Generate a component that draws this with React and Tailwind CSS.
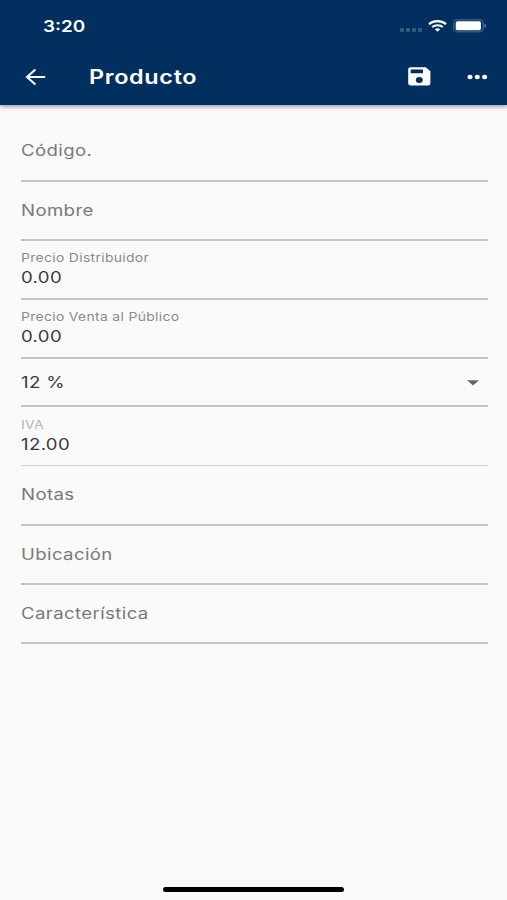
import React from 'react';

function Field({ label, value, labelTop = 'mt-[18px]', height = 'h-[59px]', muted = false }) {
  return (
    <div className={`flex shrink-0 flex-col ${height} ${muted ? 'border-b border-[#d0d0d0]' : 'border-b-2 border-[#c5c5c5]'}`}>
      {value ? (
        <>
          <span className={`block h-4 origin-left scale-x-[1.2] self-start whitespace-nowrap text-[11.6px] leading-4 tracking-[0.27px] ${muted ? 'mt-[10px] text-[#b4b4b4]' : 'mt-[9px] text-[#8a8a8a]'}`}>
            {label}
          </span>
          <span className="mt-px block h-[22px] origin-left scale-x-[1.2] self-start whitespace-nowrap text-[15.5px] leading-[22px] tracking-[0.3px] text-[#3a3a3a]">
            {value}
          </span>
        </>
      ) : (
        <span className={`${labelTop} block h-[22px] origin-left scale-x-[1.2] self-start whitespace-nowrap text-[15.5px] leading-[22px] tracking-[0.32px] text-[#797979]`}>
          {label}
        </span>
      )}
    </div>
  );
}

function StatusBar() {
  return (
    <div className="flex h-[50px] items-center pl-[43px] pr-[20px] pt-[2px]">
      <span className="mt-[2px] origin-left scale-x-[1.22] text-[15.5px] font-semibold">3:20</span>
      <div className="ml-auto flex items-center">
        <div className="mr-[6px] mt-[8px] flex gap-[2px]">
          {[0, 1, 2, 3].map((i) => (
            <i key={i} className="h-[4px] w-[4px] rounded-[1px] bg-[#34597f]" />
          ))}
        </div>
        <svg width="19" height="12" viewBox="0 0 19 12" className="mr-[6px]" fill="none" stroke="white">
          <path d="M1 4.1C5.8 0.2 13.2 0.2 18 4.1" strokeWidth="2.2" />
          <path d="M4.2 7C7.2 4.5 11.8 4.5 14.8 7" strokeWidth="2" />
          <path d="M6.8 9.2C8.2 8 10.8 8 12.2 9.2L9.5 11.7Z" fill="white" stroke="none" />
        </svg>
        <svg width="34" height="14" viewBox="0 0 34 14">
          <rect x="0.75" y="0.75" width="29.5" height="12" rx="3.5" fill="none" stroke="#365b82" strokeWidth="1.5" />
          <rect x="2.7" y="2.3" width="25.3" height="9" rx="1.7" fill="white" />
          <path d="M31.5 4.6C33.4 5.4 33.4 8.4 31.5 9.2Z" fill="#6d88a5" />
        </svg>
      </div>
    </div>
  );
}

function AppBar() {
  return (
    <div className="flex h-[53px] items-center pl-[25px] pr-[18px]">
      <svg width="21" height="18" viewBox="0 0 21 18" fill="none" stroke="white" strokeWidth="2.1">
        <path d="M20.2 9H2M10.4 1.5L2 9L10.4 16.5" />
      </svg>
      <h1 className="ml-[43px] origin-left scale-x-[1.2] text-[19.5px] font-semibold leading-6 tracking-[0.55px]">Producto</h1>
      <svg width="23" height="19" viewBox="0 0 23 19" className="ml-auto">
        <path fill="white" fillRule="evenodd" d="M2.6 0.3H17.8L22.4 4.3V16.5Q22.4 18.5 20 18.5H2.6Q0.2 18.5 0.2 16.5V2.3Q0.2 0.3 2.6 0.3ZM2.7 2.4V6.3H15V2.4ZM11.3 10A3.5 3 0 1 0 11.3 16A3.5 3 0 1 0 11.3 10Z" />
      </svg>
      <svg width="22" height="6" viewBox="0 0 22 6" className="ml-[36.5px]" fill="white">
        <ellipse cx="3" cy="3" rx="2.6" ry="2.2" />
        <ellipse cx="10.3" cy="3" rx="2.6" ry="2.2" />
        <ellipse cx="17.6" cy="3" rx="2.6" ry="2.2" />
      </svg>
    </div>
  );
}

export default function App() {
  return (
    <div className="flex h-[900px] w-[507px] flex-col overflow-hidden bg-[#fafafa] font-[Inter,sans-serif]">
      <header className="h-[105px] shrink-0 bg-[#012f60] text-white shadow-[0_2px_4px_rgba(0,0,0,0.35)]">
        <StatusBar />
        <AppBar />
      </header>
      <main className="flex grow flex-col pl-[20.5px] pr-[19.5px] pt-[18px]">
        <Field label="Código." labelTop="mt-[17px]" />
        <Field label="Nombre" />
        <Field label="Precio Distribuidor" value="0.00" />
        <Field label="Precio Venta al Público" value="0.00" />
        <div className="flex h-12 shrink-0 items-center border-b-2 border-[#c5c5c5]">
          <span className="mt-[2px] origin-left scale-x-[1.2] text-[15.5px] leading-[22px] tracking-[0.3px] text-[#3a3a3a]">12 %</span>
          <svg width="12" height="6" viewBox="0 0 12 6" className="ml-auto mr-[9px] mt-px">
            <path d="M0 0.3H12L6 5.5Z" fill="#666666" />
          </svg>
        </div>
        <Field label="IVA" value="12.00" muted />
        <Field label="Notas" height="h-[60px]" />
        <Field label="Ubicación" />
        <Field label="Característica" />
      </main>
      <div className="mb-[8px] ml-[163px] h-[5px] w-[181px] shrink-0 rounded-full bg-black" />
    </div>
  );
}
